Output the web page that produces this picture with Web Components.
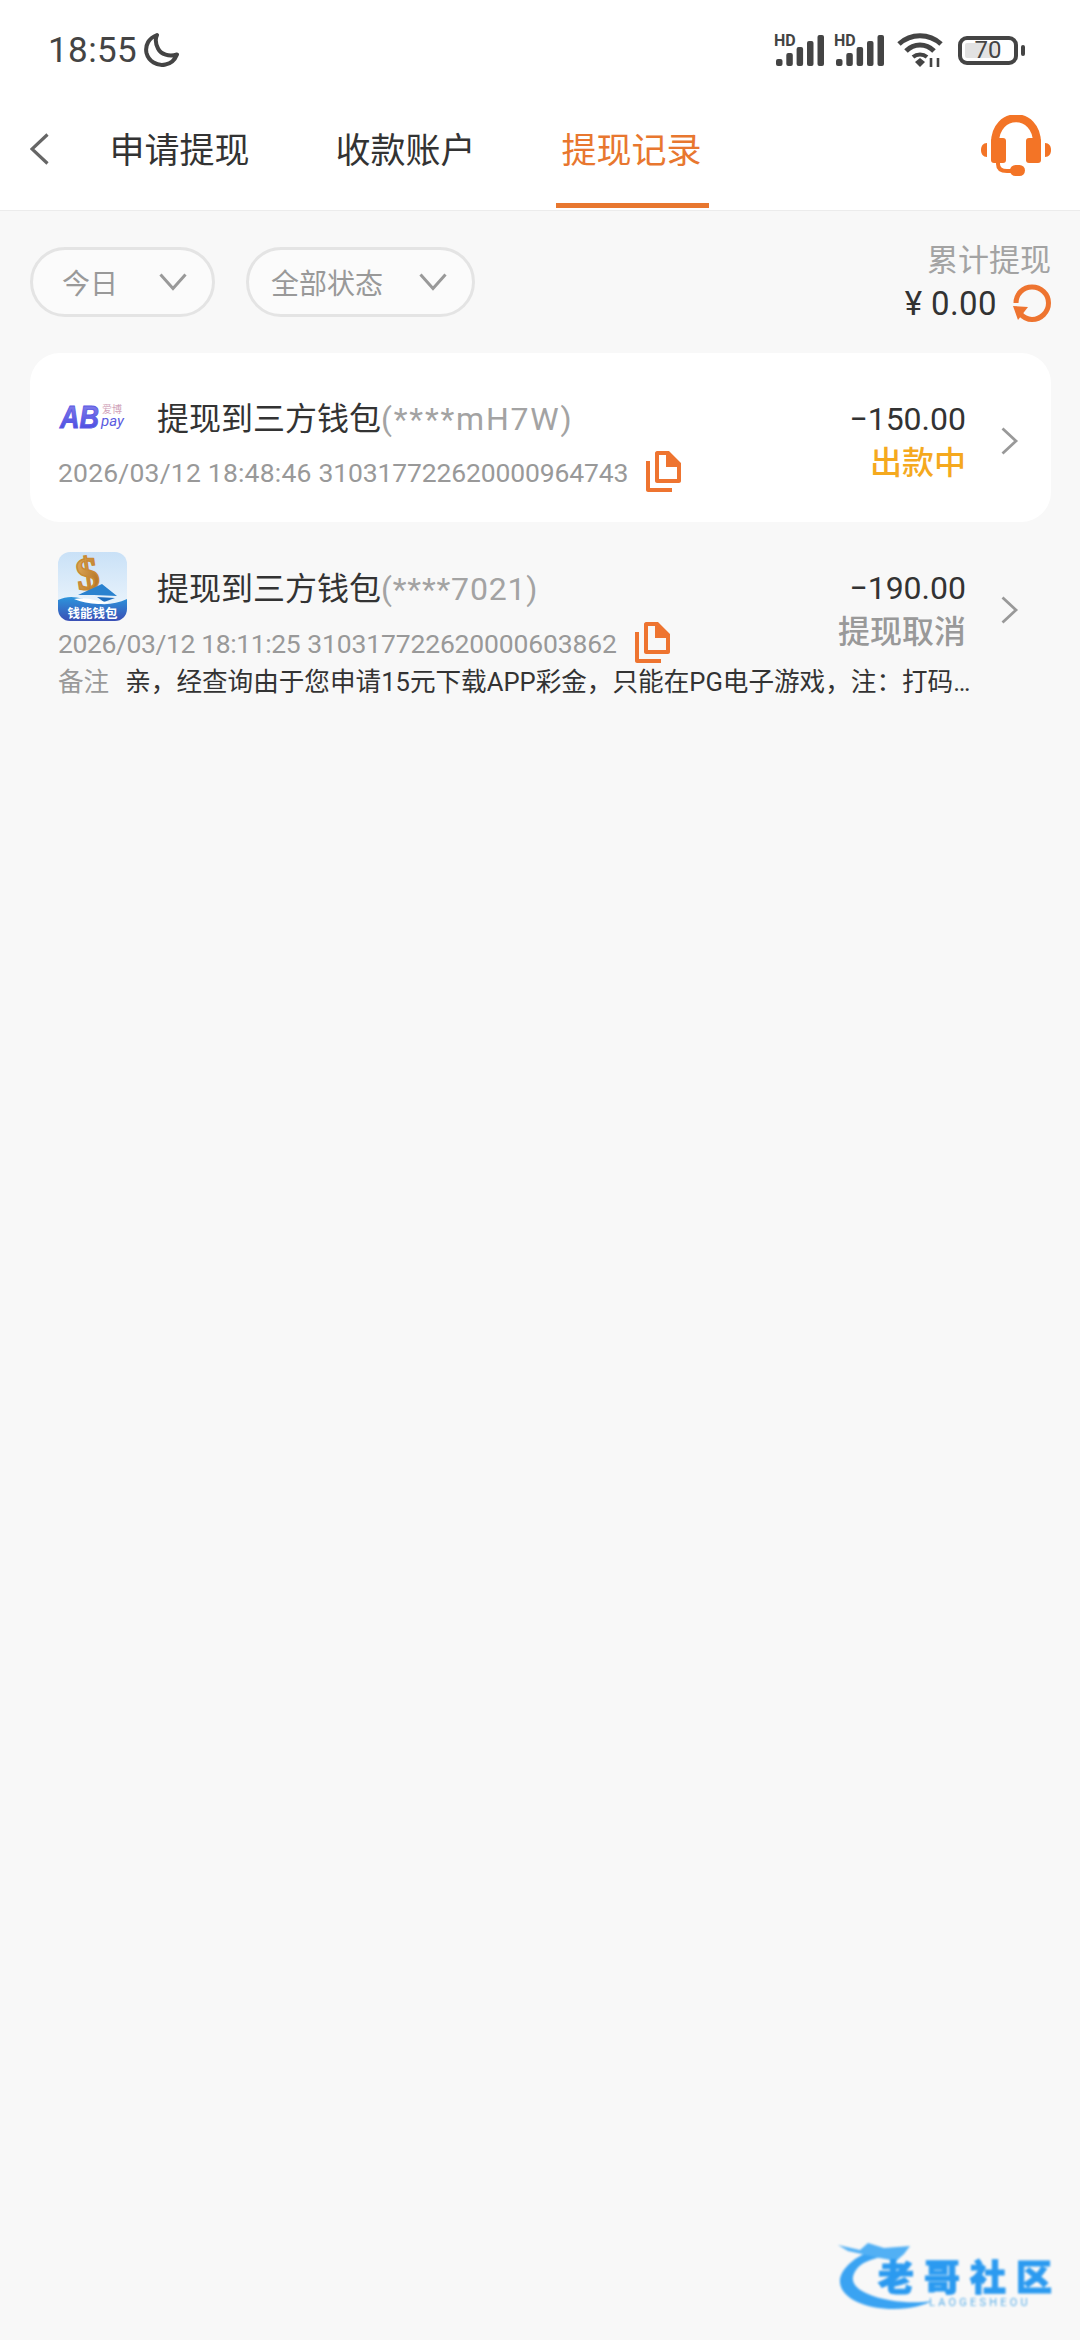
<!DOCTYPE html>
<html lang="zh">
<head>
<meta charset="utf-8">
<title>提现记录</title>
<style>
  html, body { margin: 0; padding: 0; }
  body {
    width: 1080px;
    height: 2340px;
    position: relative;
    overflow: hidden;
    background: #f8f8f8;
    font-family: Roboto, "Noto Sans CJK SC", sans-serif;
    color: #333;
  }
</style>
</head>
<body>
  <top-header>
    <status-bar></status-bar>
    <nav-tabs></nav-tabs>
  </top-header>

  <filter-bar>
    <filter-pill slot="pills" pad="32" style="width:185px">今日</filter-pill>
    <filter-pill slot="pills" pad="25" style="width:229px">全部状态</filter-pill>
    <total-box slot="total" label="累计提现" value="¥ 0.00"></total-box>
  </filter-bar>

  <record-list>
    <record-row card account="(****mH7W)" track="1.800" amount="−150.00" state="出款中" color="#f5a91e"
      date="2026/03/12 18:48:46" date-track="0.200" serial="310317722620000964743">
      <ab-logo slot="logo"></ab-logo>
    </record-row>
    <record-row account="(****7021)" track="0.800" amount="−190.00" state="提现取消" color="#999"
      date="2026/03/12 18:11:25" date-track="-0.400" serial="310317722620000603862"
      note="亲，经查询由于您申请15元下载APP彩金，只能在PG电子游戏，注：打码…">
      <wallet-logo slot="logo"></wallet-logo>
    </record-row>
  </record-list>

  <site-mark></site-mark>

<script>
class TopHeader extends HTMLElement {
  constructor() {
    super();
    this.attachShadow({ mode: "open" });
    this.shadowRoot.innerHTML = `
      <style>
        :host { display: block; background: #fff; border-bottom: 1px solid #ececec; }
      </style>
      <slot></slot>
    `;
  }
}

class StatusBar extends HTMLElement {
  constructor() {
    super();
    this.attachShadow({ mode: "open" });
    const signal = `
      <svg class="sig" width="50" height="45" viewBox="0 -6 50 45">
        <text x="0" y="12" font-family="Roboto" font-weight="700" font-size="16" fill="#444">HD</text>
        <g fill="#444">
          <rect x="2" y="25" width="6.500" height="7" rx="2"/>
          <rect x="12.300" y="19" width="6.500" height="13" rx="2"/>
          <rect x="22.600" y="13" width="6.500" height="19" rx="2"/>
          <rect x="33" y="7" width="6.500" height="25" rx="2"/>
          <rect x="43.500" y="1" width="6.500" height="31" rx="2"/>
        </g>
      </svg>`;
    this.shadowRoot.innerHTML = `
      <style>
        :host {
          display: flex;
          align-items: center;
          height: 100px;
          padding: 0 55px 0 48px;
          box-sizing: border-box;
          color: #444;
        }
        .time { font-size: 35px; line-height: 1; letter-spacing: 0.400px; }
        .moon { margin-left: 6px; }
        .right { margin-left: auto; display: flex; align-items: center; }
        .right .sim2 { margin-left: 10px; display: flex; }
        .wifi { margin-left: 13px; }
        .battery {
          margin-left: 15px;
          width: 60px;
          height: 29px;
          box-sizing: border-box;
          border: 4px solid #444;
          border-radius: 9px;
          padding: 3px;
          position: relative;
          display: flex;
        }
        .level { width: 70%; background: #e2e2e2; border-radius: 2px; }
        .pct {
          position: absolute;
          inset: 0;
          text-align: center;
          font-size: 24px;
          line-height: 21px;
          color: #444;
        }
        .nub { width: 4px; height: 11px; margin-left: 3px; background: #444; border-radius: 2px; }
      </style>
      <span class="time">18:55</span>
      <svg class="moon" width="36" height="36" viewBox="0 0 36 36" fill="none">
        <path d="M14 3C6 6 1.800 13 3.500 21C5.500 29 14 34.500 22.500 32.500C28 31.500 32 27.500 34 22.500C26 25 18 22.500 15 16.500C12.500 11.500 12 7 14 3Z" stroke="#444" stroke-width="4" stroke-linejoin="round"/>
      </svg>
      <div class="right">
        ${signal}
        <span class="sim2">${signal}</span>
        <svg class="wifi" width="46" height="36" viewBox="0 0 46 36" fill="none" stroke="#444" stroke-width="5">
          <path d="M2 12C14 1 32 1 44 12"/>
          <path d="M9 19C17 11 29 11 37 19"/>
          <path d="M16 25C20 21.500 26 21.500 30 25" stroke-width="4"/>
          <path d="M18 30L23 26L28 30L23 35Z" fill="#444" stroke="none"/>
          <path d="M34 26V35M41 26V35" stroke-width="2.600"/>
        </svg>
        <div class="battery"><div class="level"></div><div class="pct">70</div></div>
        <div class="nub"></div>
      </div>
    `;
  }
}

class NavTabs extends HTMLElement {
  constructor() {
    super();
    this.attachShadow({ mode: "open" });
    this.shadowRoot.innerHTML = `
      <style>
        :host {
          display: flex;
          height: 110px;
          padding: 0 29px 0 30px;
          align-items: flex-start;
          box-sizing: border-box;
        }
        .back { margin: 33px 55px 0 0; }
        .tabs { display: flex; gap: 73px; }
        .tab {
          width: 153px;
          height: 108px;
          box-sizing: border-box;
          padding: 0 2px 9px 0;
          border-bottom: 5px solid transparent;
          display: flex;
          align-items: center;
          justify-content: center;
          font-size: 35px;
          color: #333;
        }
        .tab.on { color: #e8772f; border-bottom-color: #e8772f; }
        .help { margin: 15px 0 0 auto; }
      </style>
      <svg class="back" width="19" height="32" viewBox="0 0 19 32" fill="none">
        <path d="M17.500 1.500L2 16L17.500 30.500" stroke="#666" stroke-width="3.200"/>
      </svg>
      <div class="tabs">
        <div class="tab">申请提现</div>
        <div class="tab">收款账户</div>
        <div class="tab on">提现记录</div>
      </div>
      <svg class="help" width="70" height="62" viewBox="0 0 70 62" fill="#f37426">
        <path d="M14 28C14 -5 56 -5 56 28" fill="none" stroke="#f37426" stroke-width="8"/>
        <rect x="10" y="23" width="15" height="25" rx="3"/>
        <rect x="45" y="23" width="15" height="25" rx="3"/>
        <path d="M6 28V42C2 42 0 39 0 35C0 31 2 28 6 28Z"/>
        <path d="M64 28V42C68 42 70 39 70 35C70 31 68 28 64 28Z"/>
        <path d="M17 47V49C17 54 21 56 26 56H32" fill="none" stroke="#f37426" stroke-width="4"/>
        <rect x="29" y="50" width="15" height="11" rx="5.500"/>
      </svg>
    `;
  }
}

class FilterBar extends HTMLElement {
  constructor() {
    super();
    this.attachShadow({ mode: "open" });
    this.shadowRoot.innerHTML = `
      <style>
        :host {
          display: flex;
          align-items: center;
          justify-content: space-between;
          height: 70px;
          margin-top: 36px;
          padding: 0 29px 0 30px;
        }
        .pills { display: flex; gap: 31px; }
      </style>
      <div class="pills"><slot name="pills"></slot></div>
      <slot name="total"></slot>
    `;
  }
}

class FilterPill extends HTMLElement {
  constructor() {
    super();
    this.attachShadow({ mode: "open" });
    const pad = this.getAttribute("pad") || 22;
    this.shadowRoot.innerHTML = `
      <style>
        :host {
          display: flex;
          align-items: center;
          justify-content: space-between;
          height: 70px;
          box-sizing: border-box;
          padding: 0 25px 0 ${pad - 3}px;
          border: 3px solid #e4e4e4;
          border-radius: 35px;
          background: #fbfbfb;
          font-size: 28px;
          color: #999;
        }
      </style>
      <slot></slot>
      <svg width="28" height="18" viewBox="0 0 28 18" fill="none">
        <path d="M1.500 1.500L14 15.500L26.500 1.500" stroke="#999" stroke-width="3"/>
      </svg>
    `;
  }
}

class TotalBox extends HTMLElement {
  constructor() {
    super();
    this.attachShadow({ mode: "open" });
    this.shadowRoot.innerHTML = `
      <style>
        :host { display: block; text-align: right; }
        .label { font-size: 31px; line-height: 42px; color: #a3a3a3; }
        .value { display: flex; align-items: center; justify-content: flex-end; height: 42px; font-size: 33px; letter-spacing: 0.400px; color: #333; }
        svg { margin-left: 16px; }
      </style>
      <div class="label">${this.getAttribute("label")}</div>
      <div class="value">
        <span>${this.getAttribute("value")}</span>
        <svg width="38" height="38" viewBox="0 0 38 38" fill="none">
          <path d="M3 19C3 10 10 3 19 3C28 3 35.500 10 35.500 19C35.500 28 28 35.500 19 35.500C14 35.500 10 33 7 29.500" stroke="#ee7430" stroke-width="5"/>
          <path d="M0 22L15 23L5 36Z" fill="#ee7430"/>
        </svg>
      </div>
    `;
  }
}

class RecordList extends HTMLElement {
  constructor() {
    super();
    this.attachShadow({ mode: "open" });
    this.shadowRoot.innerHTML = `
      <style>
        :host { display: block; margin: 36px 29px 0 30px; }
      </style>
      <slot></slot>
    `;
  }
}

class RecordRow extends HTMLElement {
  constructor() {
    super();
    this.attachShadow({ mode: "open" });
    const note = this.getAttribute("note");
    this.shadowRoot.innerHTML = `
      <style>
        :host {
          display: grid;
          grid-template-columns: 1fr auto 52px;
          padding: 32px 33px 29px 28px;
          border-radius: 30px;
        }
        :host([card]) { background: #fff; }
        :host(:not([card])) { padding-top: 30px; padding-bottom: 0; }
        .main { grid-column: 1; grid-row: 1; min-width: 0; }
        .head { display: flex; align-items: center; min-height: 64px; }
        .logo { width: 99px; display: flex; flex: none; }
        .title { font-size: 32px; color: #333; white-space: nowrap; padding-bottom: 2px; }
        .title span { color: #a3a3a3; letter-spacing: ${this.getAttribute("track")}px; }
        .meta { display: flex; align-items: center; height: 44px; font-size: 26.500px; color: #999; white-space: nowrap; }
        :host(:not([card])) .meta { height: 43px; }
        .meta span { padding-top: 2px; }
        .date { letter-spacing: ${this.getAttribute("date-track")}px; margin-right: 7px; }
        .serial { letter-spacing: -0.150px; }
        .side {
          grid-column: 2;
          grid-row: 1;
          display: flex;
          flex-direction: column;
          justify-content: center;
          align-items: flex-end;
          padding-top: 4px;
        }
        .amount { font-size: 32px; line-height: 44px; color: #333; }
        .state { font-size: 32px; line-height: 44px; font-weight: 500; }
        .arrow { grid-column: 3; grid-row: 1; align-self: center; justify-self: end; margin-top: 4px; }
        .note {
          grid-column: 1 / 3;
          grid-row: 2;
          display: flex;
          font-size: 25.600px;
          line-height: 36px;
          white-space: nowrap;
          color: #333;
        }
        .note b { font-weight: 400; color: #999; margin-right: 16px; }
      </style>
      <div class="main">
        <div class="head">
          <div class="logo"><slot name="logo"></slot></div>
          <div class="title">提现到三方钱包<span>${this.getAttribute("account")}</span></div>
        </div>
        <div class="meta">
          <span class="date">${this.getAttribute("date")}</span>
          <span class="serial">${this.getAttribute("serial")}</span>
          <copy-icon></copy-icon>
        </div>
      </div>
      <div class="side">
        <div class="amount">${this.getAttribute("amount")}</div>
        <div class="state" style="color:${this.getAttribute("color")}">${this.getAttribute("state")}</div>
      </div>
      <svg class="arrow" width="17" height="28" viewBox="0 0 17 28" fill="none">
        <path d="M1.500 1.500L15 14L1.500 26.500" stroke="#999" stroke-width="2.800"/>
      </svg>
      ${note ? `<div class="note"><b>备注</b><span>${note}</span></div>` : ""}
    `;
  }
}

class CopyIcon extends HTMLElement {
  constructor() {
    super();
    this.attachShadow({ mode: "open" });
    this.shadowRoot.innerHTML = `
      <style>
        :host { display: flex; margin-left: 18px; flex: none; }
      </style>
      <svg width="35" height="41" viewBox="0 0 35 41" fill="#ee7430">
        <path d="M0 10H4V37H26V41H2C1 41 0 40 0 39Z"/>
        <path fill-rule="evenodd" d="M11 0H23L35 12V30C35 31 34 32 33 32H11C10 32 9 31 9 30V2C9 1 10 0 11 0ZM13 4V28H31V16H20V4Z"/>
      </svg>
    `;
  }
}

class AbLogo extends HTMLElement {
  constructor() {
    super();
    this.attachShadow({ mode: "open" });
    this.shadowRoot.innerHTML = `
      <style>
        :host { display: block; margin: -4px 0 -4px -2px; }
        svg { display: block; overflow: visible; }
      </style>
      <svg width="68" height="52" viewBox="-4 -4 68 52">
        <defs>
          <linearGradient id="ab" x1="0" y1="0" x2="0" y2="1">
            <stop offset="0" stop-color="#8d86ea"/>
            <stop offset="1" stop-color="#3f44e0"/>
          </linearGradient>
        </defs>
        <text transform="translate(0 33) scale(1 1.180)" font-family="Liberation Sans" font-style="italic" font-weight="700" font-size="27"
          fill="url(#ab)" stroke="#5a58e4" stroke-width="0.800">AB</text>
        <text x="42" y="18" font-family="Noto Sans CJK SC" font-size="10" fill="#cf9fb8">爱博</text>
        <text x="41" y="31" font-family="Roboto" font-style="italic" font-size="15" fill="#5a5ae0">pay</text>
      </svg>
    `;
  }
}

class WalletLogo extends HTMLElement {
  constructor() {
    super();
    this.attachShadow({ mode: "open" });
    this.shadowRoot.innerHTML = `
      <style>
        :host { display: block; }
        svg { display: block; border-radius: 12px; }
      </style>
      <svg width="69" height="69" viewBox="0 0 69 69">
        <defs>
          <linearGradient id="sky" x1="0" y1="0" x2="0" y2="1">
            <stop offset="0" stop-color="#c9e1f7"/>
            <stop offset="1" stop-color="#f2f8fd"/>
          </linearGradient>
          <linearGradient id="sea" x1="0" y1="0" x2="0" y2="1">
            <stop offset="0" stop-color="#2d95dc"/>
            <stop offset="1" stop-color="#3a4fb5"/>
          </linearGradient>
          <linearGradient id="gold" x1="0" y1="0" x2="1" y2="1">
            <stop offset="0" stop-color="#e9b765"/>
            <stop offset="1" stop-color="#a8641c"/>
          </linearGradient>
        </defs>
        <rect width="69" height="69" fill="url(#sky)"/>
        <text x="30" y="37" text-anchor="middle" font-family="Liberation Serif" font-weight="700" font-size="46"
          fill="url(#gold)" stroke="#c98a34" stroke-width="1.500" transform="rotate(-8 30 25)">$</text>
        <path d="M20 43L44 32L59 44L36 43Z" fill="#2a82cf"/>
        <path d="M39 45L57 46L46 50Z" fill="#1f6dbd"/>
        <path d="M0 48C12 42 24 46 34 50C44 54 58 52 69 47V69H0Z" fill="url(#sea)"/>
        <path d="M16 47C28 44 40 50 52 50C42 54 26 51 16 47Z" fill="#fff"/>
        <text x="34.500" y="66" text-anchor="middle" font-family="Noto Sans CJK SC" font-weight="700" font-size="12.500" fill="#fff">钱能钱包</text>
      </svg>
    `;
  }
}

class SiteMark extends HTMLElement {
  constructor() {
    super();
    this.attachShadow({ mode: "open" });
    this.shadowRoot.innerHTML = `
      <style>
        :host {
          position: absolute;
          left: 838px;
          top: 2240px;
          width: 225px;
          height: 72px;
          filter: blur(0.9px);
        }
        svg { position: absolute; left: 0; top: 0; }
        .name {
          position: absolute;
          left: 40px;
          top: 19px;
          font-size: 36px;
          line-height: 40px;
          font-weight: 900;
          letter-spacing: 10px;
          white-space: nowrap;
          color: #2b9af0;
          -webkit-text-stroke: 1px #2b9af0;
        }
        .sub {
          position: absolute;
          left: 91px;
          top: 56px;
          font-size: 11px;
          line-height: 14px;
          letter-spacing: 3.200px;
          color: #5aaee8;
          white-space: nowrap;
        }
      </style>
      <svg width="225" height="72" viewBox="0 0 225 72" fill="#3aa3f2">
        <path d="M30 12C12 20 1 32 2 43C4 59 28 69 56 69C74 69 86 65 94 61C76 64 48 62 30 54C16 48 11 40 18 30C23 23 32 19 44 17Z"/>
        <path d="M0 5L22 10L30 3L46 8L72 6L66 14L58 21L42 18L28 15L10 11Z" fill="#52b0f4"/>
      </svg>
      <div class="name">老哥社区</div>
      <div class="sub">LAOGESHEOU</div>
    `;
  }
}

customElements.define("top-header", TopHeader);
customElements.define("status-bar", StatusBar);
customElements.define("nav-tabs", NavTabs);
customElements.define("filter-bar", FilterBar);
customElements.define("filter-pill", FilterPill);
customElements.define("total-box", TotalBox);
customElements.define("record-list", RecordList);
customElements.define("copy-icon", CopyIcon);
customElements.define("record-row", RecordRow);
customElements.define("ab-logo", AbLogo);
customElements.define("wallet-logo", WalletLogo);
customElements.define("site-mark", SiteMark);
</script>
</body>
</html>
